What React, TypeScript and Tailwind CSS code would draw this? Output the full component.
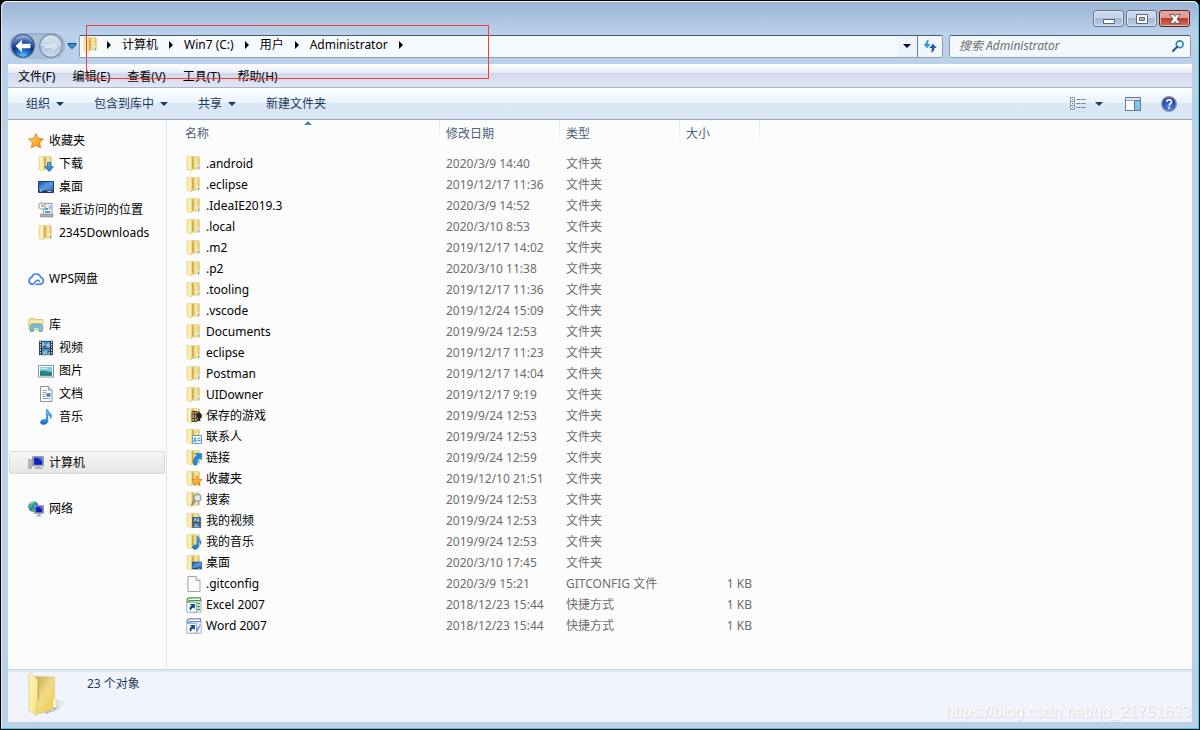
import type { ReactNode } from "react";

type FileRow = {
  name: string;
  date: string;
  type: string;
  size?: string;
  icon?: string;
};

const FOLDER = "文件夹";
const SHORTCUT = "快捷方式";

const files: FileRow[] = [
  { name: ".android", date: "2020/3/9 14:40", type: FOLDER },
  { name: ".eclipse", date: "2019/12/17 11:36", type: FOLDER },
  { name: ".IdeaIE2019.3", date: "2020/3/9 14:52", type: FOLDER },
  { name: ".local", date: "2020/3/10 8:53", type: FOLDER },
  { name: ".m2", date: "2019/12/17 14:02", type: FOLDER },
  { name: ".p2", date: "2020/3/10 11:38", type: FOLDER },
  { name: ".tooling", date: "2019/12/17 11:36", type: FOLDER },
  { name: ".vscode", date: "2019/12/24 15:09", type: FOLDER },
  { name: "Documents", date: "2019/9/24 12:53", type: FOLDER },
  { name: "eclipse", date: "2019/12/17 11:23", type: FOLDER },
  { name: "Postman", date: "2019/12/17 14:04", type: FOLDER },
  { name: "UIDowner", date: "2019/12/17 9:19", type: FOLDER },
  { name: "保存的游戏", date: "2019/9/24 12:53", type: FOLDER, icon: "games" },
  { name: "联系人", date: "2019/9/24 12:53", type: FOLDER, icon: "contacts" },
  { name: "链接", date: "2019/9/24 12:59", type: FOLDER, icon: "links" },
  { name: "收藏夹", date: "2019/12/10 21:51", type: FOLDER, icon: "favorites" },
  { name: "搜索", date: "2019/9/24 12:53", type: FOLDER, icon: "searches" },
  { name: "我的视频", date: "2019/9/24 12:53", type: FOLDER, icon: "videos" },
  { name: "我的音乐", date: "2019/9/24 12:53", type: FOLDER, icon: "music" },
  { name: "桌面", date: "2020/3/10 17:45", type: FOLDER, icon: "desktop" },
  { name: ".gitconfig", date: "2020/3/9 15:21", type: "GITCONFIG 文件", size: "1 KB", icon: "file" },
  { name: "Excel 2007", date: "2018/12/23 15:44", type: SHORTCUT, size: "1 KB", icon: "excel" },
  { name: "Word 2007", date: "2018/12/23 15:44", type: SHORTCUT, size: "1 KB", icon: "word" },
];

const sidebarGroups = [
  {
    label: "收藏夹",
    icon: "star",
    items: [
      { label: "下载", icon: "downloads" },
      { label: "桌面", icon: "screen" },
      { label: "最近访问的位置", icon: "recent" },
      { label: "2345Downloads", icon: "folder" },
    ],
  },
  { label: "WPS网盘", icon: "cloud", items: [] },
  {
    label: "库",
    icon: "library",
    items: [
      { label: "视频", icon: "film" },
      { label: "图片", icon: "picture" },
      { label: "文档", icon: "document" },
      { label: "音乐", icon: "note" },
    ],
  },
  { label: "计算机", icon: "computer", items: [], selected: true },
  { label: "网络", icon: "network", items: [] },
];

const crumbs = ["计算机", "Win7 (C:)", "用户", "Administrator"];
const menus = ["文件(F)", "编辑(E)", "查看(V)", "工具(T)", "帮助(H)"];
const commands = [
  { label: "组织", arrow: true },
  { label: "包含到库中", arrow: true },
  { label: "共享", arrow: true },
  { label: "新建文件夹", arrow: false },
];

/* Gradients shared by every icon */
function IconDefs() {
  return (
    <svg className="absolute size-0" aria-hidden="true">
      <defs>
        <linearGradient id="flap" x1="0" x2="1" y1="0" y2="0">
          <stop offset="0" stopColor="#f3e39a" />
          <stop offset="0.5" stopColor="#fdf4c2" />
          <stop offset="1" stopColor="#e6cc6a" />
        </linearGradient>
        <linearGradient id="body" x1="0" x2="1" y1="0" y2="0">
          <stop offset="0" stopColor="#b8963a" />
          <stop offset="0.45" stopColor="#f1de8e" />
          <stop offset="0.7" stopColor="#f6e7a4" />
          <stop offset="1" stopColor="#d9bb50" />
        </linearGradient>
        <linearGradient id="bigFlap" x1="0" x2="1" y1="0" y2="1">
          <stop offset="0" stopColor="#fff6bf" />
          <stop offset="0.6" stopColor="#fbeb9c" />
          <stop offset="1" stopColor="#efcf62" />
        </linearGradient>
        <linearGradient id="bigBody" x1="0" x2="1" y1="0" y2="1">
          <stop offset="0" stopColor="#c2a345" />
          <stop offset="0.5" stopColor="#f0dc86" />
          <stop offset="1" stopColor="#e9c944" />
        </linearGradient>
        <linearGradient id="shade" x1="0" x2="1" y1="0" y2="0">
          <stop offset="0" stopColor="#7f8aa0" stopOpacity="0.8" />
          <stop offset="1" stopColor="#c6ccda" stopOpacity="0" />
        </linearGradient>
        <radialGradient id="backBall" cx="0.5" cy="1" r="1">
          <stop offset="0" stopColor="#5fe0ff" />
          <stop offset="0.3" stopColor="#2273cc" />
          <stop offset="0.55" stopColor="#0b2f8a" />
          <stop offset="0.75" stopColor="#4268b4" />
          <stop offset="1" stopColor="#b9cbee" />
        </radialGradient>
        <linearGradient id="forwardBall" x1="0" x2="0" y1="0" y2="1">
          <stop offset="0" stopColor="#d9e5f1" />
          <stop offset="0.48" stopColor="#c6d6e8" />
          <stop offset="0.52" stopColor="#afc5de" />
          <stop offset="1" stopColor="#cfe0f1" />
        </linearGradient>
        <linearGradient id="blue" x1="0" x2="0" y1="0" y2="1">
          <stop offset="0" stopColor="#6fb9ee" />
          <stop offset="1" stopColor="#1672c4" />
        </linearGradient>
        <linearGradient id="screen" x1="0" x2="1" y1="0" y2="1">
          <stop offset="0" stopColor="#1d4fae" />
          <stop offset="0.5" stopColor="#5a9ae4" />
          <stop offset="1" stopColor="#1f5cbc" />
        </linearGradient>
        <linearGradient id="star" x1="0" x2="1" y1="0" y2="1">
          <stop offset="0" stopColor="#ffe7a0" />
          <stop offset="0.5" stopColor="#fdb52c" />
          <stop offset="1" stopColor="#ef7d12" />
        </linearGradient>
        <radialGradient id="help" cx="0.5" cy="0.75" r="0.7">
          <stop offset="0" stopColor="#4b8cf0" />
          <stop offset="1" stopColor="#17309a" />
        </radialGradient>
      </defs>
    </svg>
  );
}

const folderShape = (
  <>
    <path d="M5 1.500 6.500.400h6l.800.800v12H5z" fill="url(#body)" stroke="#d8bd62" strokeWidth=".5" />
    <path d="M1 .500 4.600.300l2 1.800v10.200L5.200 15 1 13.400z" fill="url(#flap)" stroke="#dcc570" strokeWidth=".5" />
    <path d="M6.800 2.200v10" stroke="#a98a38" strokeWidth=".6" />
    <path d="M12.200 9v4" stroke="#fff" strokeWidth="1.400" />
    <path d="M12.400 10.500v2.200" stroke="#3da2e6" strokeWidth="1.100" />
  </>
);

const starPath = "M8 .6 10.2 5.4l5.3.6-3.9 3.6 1 5.3L8 12.3l-4.6 2.6 1-5.3L.5 6l5.3-.6z";
const notePath = "M7.3.5h1.4c.3 2.5 4.3 3.6 3.8 7-.1 1-.5 1.7-1 2.3.3-2.3-.8-3.4-2.6-4.1v6.600c0 1.900-2 3.200-4.200 3.200-1.900 0-3.400-.9-3.400-2.300 0-1.600 1.900-2.800 4-2.800.8 0 1.500.2 2 .4z";

const filmShape = (
  <>
    <path d="M1 .8h14v14.400H1z" fill="#2c3238" />
    <path d="M4 1.400h8v6H4zM4 8.400h8v6.200H4z" fill="#3f8ed0" />
    <path d="m4 1.400 4 3.400 4-2v4.600H4zM4 14.600l3-4 5 2v2z" fill="#8ac3ec" />
    <path d="M4.500 7.400 7 4.600l2 2.800M8 14.600l2.400-4.300 1.600 1.300" fill="#5c4450" />
    <path d="M2.400 1.500v13.400M13.600 1.500v13.400" stroke="#e6e6e6" strokeWidth="1.200" strokeDasharray="1.4 1.2" />
  </>
);

const screenShape = (
  <>
    <path d="M.5 2.500h15v11H.5z" fill="url(#screen)" stroke="#1c3f80" />
    <path d="M1 11.500h14V14H1z" fill="#27364f" />
    <circle cx="3" cy="11.600" r="1.300" fill="#4fd1e8" />
    <path d="M9.500 12h4v1h-4z" fill="#a9c4e8" />
  </>
);

function shortcutShape(color: string, letter: ReactNode) {
  return (
    <>
      <path d="M4.500 3.500h10.700v11.700H4.500z" fill="#f5f8fa" stroke="#9aaab6" strokeWidth=".8" />
      <path d="M1 5V3.600C1 2 2.200.900 3.800.900h10.700v2.700H3.600c-.8 0-1.300.6-1.300 1.400z" fill="#fff" stroke={color} strokeWidth="1.100" />
      {letter}
      <path d="M.8 5.400h9.600v9.800H.8z" fill="#fff" stroke="#8a97a8" strokeWidth=".8" />
      <path d="M3.900 7.100h5v5L7.300 10.500c-1.700 1-2.400 2-2.300 3.600-2.300-1.900-1.800-4.400.6-5.300z" fill="#174a96" />
    </>
  );
}

const shapes: Record<string, ReactNode> = {
  folder: folderShape,
  games: (
    <>
      {folderShape}
      <path d="M6 3.500h5v10H6z" fill="#b9a777" stroke="#4b4330" />
      <path d="M6.500 6.500h4M8.500 4v9M6.500 10.500h4" stroke="#4b4330" />
      <path d="M12 3.500h1.600v1.300c1.500.5 2.400 1.800 2.300 3.500-.1 1.500-1 2.300-2.100 2.400l.9 2.300h-3.400l.7-2.300-1.800-2.400c0-1.700.7-3 1.800-3.500z" fill="#222" />
    </>
  ),
  contacts: (
    <>
      {folderShape}
      <path d="M6.500 6.500h9v8h-9z" fill="#e9f5fb" stroke="#5a9fc4" />
      <circle cx="9" cy="9.600" r="1.100" fill="#4e93c0" />
      <path d="M7.700 12.600c0-2.200 2.600-2.200 2.600 0M11.500 9.500h3M11.500 11.500h3" stroke="#4e93c0" fill="#4e93c0" />
    </>
  ),
  links: (
    <>
      {folderShape}
      <path d="M9 3.500h6.700v6.700l-2-2c-2 1.200-3 3.500-2.800 6.800H7.700C6.600 11 8 7.500 10.900 5.500z" fill="#2389dc" stroke="#1564b0" strokeWidth=".5" />
    </>
  ),
  favorites: (
    <>
      {folderShape}
      <g transform="translate(5.500 4.500) scale(.68)">
        <path d={starPath} fill="url(#star)" stroke="#df6a12" />
      </g>
    </>
  ),
  searches: (
    <>
      {folderShape}
      <circle cx="11.500" cy="5.800" r="3.500" fill="#dbe8f3" stroke="#8b9aa6" strokeWidth="1.200" />
      <path d="m9 8.500-3.500 4.800" stroke="#84857f" strokeWidth="1.800" />
    </>
  ),
  videos: (
    <>
      {folderShape}
      <g transform="translate(5.500 3.500) scale(.64 .74)">{filmShape}</g>
    </>
  ),
  music: (
    <>
      {folderShape}
      <g transform="translate(5.500 2) scale(.75 .86)">
        <path d={notePath} fill="url(#blue)" stroke="#1d73bd" />
      </g>
    </>
  ),
  desktop: (
    <>
      {folderShape}
      <g transform="translate(6 5.500) scale(.62)">{screenShape}</g>
    </>
  ),
  downloads: (
    <>
      {folderShape}
      <path d="M9.500 6.500h3.400v4.300h2.500L11.200 15.600 7 10.800h2.500z" fill="url(#blue)" stroke="#1667ab" strokeWidth=".8" />
    </>
  ),
  file: (
    <>
      <path d="M2 .5h8l4 4v11H2z" fill="#fcfcfc" stroke="#a3a3a3" />
      <path d="M10 .5v4h4" fill="#e8e8e8" stroke="#a3a3a3" />
    </>
  ),
  excel: shortcutShape(
    "#3a9a4a",
    <path d="M11 6.500h3.200M11 9.500h3.200M11 12.500h3.200" stroke="#3a9a4a" strokeWidth="1.500" />,
  ),
  word: shortcutShape(
    "#6c86c9",
    <path d="m10 6.500 1.300 6 3-6" stroke="#7c95d2" strokeWidth="1.300" fill="none" />,
  ),
  star: <path d={starPath} fill="url(#star)" stroke="#dc7417" strokeWidth=".8" />,
  screen: screenShape,
  recent: (
    <>
      <path d="M5.500 1.500h8.500v11H5.500z" fill="#f1f3f5" stroke="#8f979f" />
      <path d="M2.500 12h12.500v3H2.500z" fill="#a9adb2" stroke="#868b91" strokeWidth=".6" />
      <path d="M7 6h3v2H7zM7 9h5v2H7z" fill="#4ea0cf" />
      <path d="M10.500 3.500h2.500v4h-2.500z" fill="#a8c7dc" />
      <circle cx="4" cy="4" r="3.300" fill="#fafafa" stroke="#8f979f" />
      <path d="M4 2v2.200h1.800" stroke="#555" fill="none" strokeWidth=".8" />
    </>
  ),
  cloud: (
    <>
      <path d="M4.300 13.200a3.400 3.400 0 0 1-.6-6.700 4.600 4.600 0 0 1 8.900-.2 3.500 3.500 0 0 1-.5 6.900H8.200" fill="none" stroke="#3b7df0" strokeWidth="1.600" strokeLinecap="round" />
      <path d="M4.300 13.200c2.500 0 2.300-2.100 3.700-3.400 1.200-1.100 2.900-.6 3.400.6" fill="none" stroke="#3b7df0" strokeWidth="1.400" strokeLinecap="round" />
    </>
  ),
  library: (
    <>
      <path d="M.8 2.500 2 1.300h4l1 1.200h8v10.300H.8z" fill="#f3df8f" stroke="#ceb25c" strokeWidth=".7" />
      <path d="M1 4.600h14" stroke="#fff5c4" />
      <path d="M2.500 14.500V9c0-1 .8-1.900 1.800-1.900h7.900c1 0 1.800.9 1.800 1.900v5.500h-2.800V10H5.300v4.500z" fill="#7cc6ea" stroke="#3b93c3" strokeWidth=".8" />
    </>
  ),
  film: filmShape,
  picture: (
    <>
      <path d="M.5 2.500h15v11.500H.5z" fill="#fff" stroke="#8b959e" />
      <path d="M2 4h12v8.500H2z" fill="#86c7ee" />
      <path d="M2 8c3-1.500 5 .5 12 .8v3.700H2z" fill="#2a8a6c" />
      <path d="M2 11h12v1.500H2z" fill="#1f6e8e" />
      <path d="M3 6c2-1.500 5-.5 6-.5" stroke="#fff" fill="none" />
    </>
  ),
  document: (
    <>
      <path d="M2.500.5h8l3.500 3.500v11.500H2.500z" fill="#fdfdfe" stroke="#8a95a3" />
      <path d="M10.500.5V4H14" fill="#dfe7f0" stroke="#8a95a3" />
      <path d="M4.500 4.500h4M4.500 6.500h4M4.500 8.500h3M4.500 10.500h3M4.500 12.500h7.500" stroke="#8297bb" strokeWidth=".9" />
      <path d="M8.500 7.200h4v3.500h-4z" fill="#3f7fc8" />
    </>
  ),
  note: (
    <g transform="translate(1 0)">
      <path d={notePath} fill="url(#blue)" stroke="#1d73bd" strokeWidth=".5" />
    </g>
  ),
  computer: (
    <>
      <path d="M.7 4.500h2.600v8.800H.7z" fill="#c7cbd0" stroke="#7f858c" strokeWidth=".7" />
      <path d="M1.500 11h1v1h-1z" fill="#59c24c" />
      <path d="M4.500 1.500h11v9.500h-11z" fill="#c9cdd3" stroke="#858b93" strokeWidth=".8" />
      <path d="M5.700 2.500h8.700v7.400H5.700z" fill="#0f24b8" />
      <path d="M9.500 2.500h4.900V6.500z" fill="#5379ea" />
      <path d="M9 11h2.500v1.700H9zM6.500 12.600h7.800v1.500H6.500z" fill="#a9aeb5" />
    </>
  ),
  network: (
    <>
      <circle cx="5.500" cy="5.500" r="5.200" fill="#2a85cf" />
      <path d="M2 2.500c2-2 4-2 5-1L5.500 4 4 4.500 3 7 .7 5.500zM4 8l2.500 1-.5 1.800-2-.4z" fill="#4fbd4d" />
      <path d="M2 3c1-1.500 2.500-2 4-2" stroke="#c4f0ff" fill="none" />
      <path d="M6.500 4.500h9v8h-9z" fill="#c9cdd3" stroke="#7d848d" strokeWidth=".7" />
      <path d="M7.500 5.500h7v6h-7z" fill="#0f24b8" />
      <path d="M11 5.500h3.500V9z" fill="#5379ea" />
      <path d="M10.200 12.500h1.600v1.700h-1.600zM8.500 14.300h5v1.200h-5z" fill="#9da3ab" />
    </>
  ),
};

function Icon({ name }: { name: string }) {
  return (
    <svg viewBox="0 0 16 16" className="size-4 shrink-0" fill="none" aria-hidden="true">
      {shapes[name]}
    </svg>
  );
}

function DownArrow() {
  return (
    <svg viewBox="0 0 8 4" className="h-1 w-2 shrink-0" fill="currentColor" aria-hidden="true">
      <path d="M0 0h8L4 4z" />
    </svg>
  );
}

function CrumbArrow() {
  return (
    <svg viewBox="0 0 4 8" className="h-2 w-1 shrink-0" aria-hidden="true">
      <path d="M0 0v8l4-4z" />
    </svg>
  );
}

function TitleBar() {
  return (
    <div className="flex justify-end gap-0.5 pt-[9px] pr-0.5">
      <button
        aria-label="最小化"
        className="flex h-[17px] w-[31px] items-center justify-center rounded-[3px] border border-[#62738f] bg-[linear-gradient(#c8d8ea_0_45%,#9fb7d2_50%,#bdd1e7)] inset-ring inset-ring-[#dbe7f3]"
      >
        <svg viewBox="0 0 12 12" className="size-3" aria-hidden="true">
          <path d="M.5 6.500h11v4H.5z" fill="#fff" stroke="#5b6577" />
        </svg>
      </button>
      <button
        aria-label="最大化"
        className="flex h-[17px] w-[31px] items-center justify-center rounded-[3px] border border-[#62738f] bg-[linear-gradient(#c8d8ea_0_45%,#9fb7d2_50%,#bdd1e7)] inset-ring inset-ring-[#dbe7f3]"
      >
        <svg viewBox="0 0 12 12" className="size-3" aria-hidden="true">
          <path d="M.5 1.500h11v9H.5z" fill="#fff" stroke="#5b6577" />
          <path d="M3.500 4.500h5v3h-5z" fill="#9fb7d2" stroke="#5b6577" />
        </svg>
      </button>
      <button
        aria-label="关闭"
        className="flex h-[17px] w-[31px] items-center justify-center rounded-[3px] border border-[#5a1d2c] bg-[linear-gradient(#e0a096_0_45%,#b93e2b_50%,#d0715c)] inset-ring inset-ring-[#e6b3ab]"
      >
        <svg viewBox="0 0 12 12" className="size-3" aria-hidden="true">
          <path d="M.6 1.500h3.700L6 3.500l1.700-2h3.700L8 6l3.400 4.500H7.700L6 8.500l-1.700 2H.6L4 6z" fill="#fff" stroke="#56506a" strokeWidth=".9" />
        </svg>
      </button>
    </div>
  );
}

function NavBar() {
  return (
    <div className="mt-1.5 mb-[5px] flex h-[26px] items-center pr-px pl-px">
      <div className="flex h-[26px] shrink-0 items-center gap-1 rounded-full bg-[#a9bfd9] px-0.5 shadow-[inset_0_1px_2px_#8ea4c0]">
        <button aria-label="后退">
          <svg viewBox="0 0 24 24" className="size-6" aria-hidden="true">
            <circle cx="12" cy="12" r="11.300" fill="url(#backBall)" stroke="#44587e" strokeWidth="1.200" />
            <path d="m4.500 12 6.500-6.300v4h8.500v4.600H11v4z" fill="#fff" />
          </svg>
        </button>
        <button aria-label="前进">
          <svg viewBox="0 0 24 24" className="size-6" aria-hidden="true">
            <circle cx="12" cy="12" r="11.300" fill="url(#forwardBall)" stroke="#7c8da4" strokeWidth="1.200" />
            <path d="m19.500 12-6.500-6.300v4H4.500v4.600H13v4z" fill="#d9e4f0" stroke="#b3c4d8" strokeWidth=".6" />
          </svg>
        </button>
      </div>
      <button aria-label="最近的页面" className="mx-0.5 shrink-0">
        <svg viewBox="0 0 10 8" className="h-2 w-2.5" aria-hidden="true">
          <path d="M1 1.500h8v1.200L5 6.800 1 2.700z" fill="#3a94d4" stroke="#174477" />
        </svg>
      </button>

      <div className="flex h-[23px] min-w-0 flex-1 rounded-xs border border-[#8e9bb0] border-t-[#4d5866] bg-[#f8fbfe]">
        <nav aria-label="地址" className="flex min-w-0 flex-1 items-center gap-2 pb-0.5 pl-[3px]">
          <Icon name="folder" />
          <ol className="flex items-center">
            {crumbs.map((crumb) => (
              <li key={crumb} className="flex items-center">
                <CrumbArrow />
                <a href="#" className="px-[11px] whitespace-nowrap">
                  {crumb}
                </a>
              </li>
            ))}
            <li>
              <CrumbArrow />
            </li>
          </ol>
        </nav>
        <button aria-label="以前的位置" className="flex w-5 items-center justify-center bg-[#eef4fb] text-[#000050]">
          <DownArrow />
        </button>
        <button aria-label="刷新" className="flex w-[25px] items-center justify-center border-l border-[#6d7d92] bg-[#f1f6fb]">
          <svg viewBox="0 0 14 14" className="size-3.5" aria-hidden="true">
            <path d="M6 .5C3.600.900 2.600 2.500 2.600 5H.200L4 9.200 7.800 5H5.200c0-1.800.1-2.800.8-4.500z" fill="#3d9bd9" />
            <path d="M8 13.500c2.400-.4 3.400-2 3.400-4.500h2.400L10 4.800 6.200 9h2.600c0 1.800-.1 2.800-.8 4.500z" fill="#235fb0" />
          </svg>
        </button>
      </div>

      <label className="ml-1.5 flex h-[23px] w-[242px] shrink-0 items-center rounded-xs border border-[#8e9bb0] border-t-[#4d5866] bg-[#f3f8fd] pr-1.5 pl-[9px]">
        <input
          type="search"
          aria-label="搜索"
          placeholder="搜索 Administrator"
          className="min-w-0 flex-1 bg-transparent italic outline-none placeholder:text-[#6d6d6d]"
        />
        <svg viewBox="0 0 12 12" className="size-3" fill="none" aria-hidden="true">
          <circle cx="7.700" cy="4.300" r="3.400" stroke="#2f86cc" strokeWidth="1.700" />
          <path d="M5.200 6.800 1 11" stroke="#2a4fa0" strokeWidth="2" strokeLinecap="round" />
        </svg>
      </label>
    </div>
  );
}

function MenuBar() {
  return (
    <div className="flex h-6 items-center gap-[17px] border-t border-b border-t-white border-b-[#a9b4cb] bg-[linear-gradient(#fff,#e6e9f4_36%,#d3d8ec_37%,#e1e6f5)] px-2.5 pt-0.5">
      {menus.map((menu) => (
        <button key={menu}>{menu}</button>
      ))}
    </div>
  );
}

function CommandBar() {
  return (
    <div className="flex h-8 items-center justify-between border-b border-[#9dabc2] bg-[linear-gradient(#fdfeff,#e8f3fc_47%,#dce7f5_48%,#dae6f4)] pr-[15px] pl-[18px] text-[#1e395b]">
      <div className="flex gap-[30px]">
        {commands.map((command) => (
          <button key={command.label} className="flex items-center gap-1.5">
            {command.label}
            {command.arrow && <DownArrow />}
          </button>
        ))}
      </div>

      <div className="flex items-center">
        <button aria-label="更改您的视图" className="flex items-center gap-[9px]">
          <svg viewBox="0 0 16 14" className="h-3.5 w-4" fill="none" aria-hidden="true">
            <path d="M.5.5h4v4h-4zM.5 4.500h4v4h-4zM.5 8.500h4v4h-4z" fill="#fff" stroke="#8595a8" />
            <path d="M2 2h1v1H2z" fill="#3a6fb5" />
            <path d="M2 6h1v1H2z" fill="#d23b2c" />
            <path d="M2 10h1v1H2z" fill="#3a6fb5" />
            <path d="M6.500 2.500h4M11.500 2.500h4M6.500 6.500h4M11.500 6.500h4M6.500 10.500h4M11.500 10.500h4" stroke="#70819a" />
          </svg>
          <DownArrow />
        </button>
        <button aria-label="显示预览窗格" className="ml-[22px]">
          <svg viewBox="0 0 16 14" className="h-3.5 w-4" aria-hidden="true">
            <path d="M.5.5h15v13H.5z" fill="#fff" stroke="#5b7896" />
            <path d="M1 1h14v2H1z" fill="#dbe5f0" />
            <path d="M9.500 3.500h6v10h-6z" fill="#7fc6e6" stroke="#5b7896" />
            <path d="M1 3.500h9" stroke="#8aa0b8" />
          </svg>
        </button>
        <button aria-label="获取帮助" className="ml-5">
          <svg viewBox="0 0 16 16" className="size-4" aria-hidden="true">
            <circle cx="8" cy="8" r="7.300" fill="url(#help)" stroke="#8b93a5" strokeWidth="1.400" />
            <path d="M5.600 6.100c0-3.400 4.900-3.200 4.900-.4 0 1.800-2.300 1.900-2.300 4" fill="none" stroke="#fff" strokeWidth="1.700" />
            <circle cx="8.200" cy="12" r="1.100" fill="#fff" />
          </svg>
        </button>
      </div>
    </div>
  );
}

function Sidebar() {
  return (
    <aside className="flex w-[159px] shrink-0 flex-col gap-[23px] border-r border-[#d6e5f5] pt-[9px]">
      {sidebarGroups.map((group) => (
        <div key={group.label}>
          <a
            href="#"
            className={
              group.selected
                ? "mx-px flex h-[23px] items-center gap-[5px] rounded-xs border border-[#d9d9d9] bg-linear-to-b from-[#f8f8f8] to-[#e5e5e5] pl-[18px]"
                : "flex h-[23px] items-center gap-[5px] pl-5"
            }
          >
            <Icon name={group.icon} />
            {group.label}
          </a>
          {group.items.map((item) => (
            <a key={item.label} href="#" className="flex h-[23px] items-center gap-[5px] pl-[30px] whitespace-nowrap">
              <Icon name={item.icon} />
              {item.label}
            </a>
          ))}
        </div>
      ))}
    </aside>
  );
}

function FileList() {
  const headCell =
    "h-[33px] bg-[linear-gradient(#dbe6f3,#fcfcfc)] bg-[length:1px_24px] bg-right-top bg-no-repeat pt-[5px] pl-1.5 text-left align-top leading-[18px] font-normal";

  return (
    <main className="min-w-0 flex-1">
      <table className="w-[593px] table-fixed border-collapse text-[#6d6d6d]">
        <colgroup>
          <col className="w-[273px]" />
          <col className="w-[120px]" />
          <col className="w-[120px]" />
          <col className="w-20" />
        </colgroup>
        <thead className="text-[#4c607a]">
          <tr>
            <th className="relative h-[33px] bg-[linear-gradient(#dbe6f3,#fcfcfc)] bg-[length:1px_24px] bg-right-top bg-no-repeat pt-[5px] pl-[18px] text-left align-top leading-[18px] font-normal">
              名称
              <svg viewBox="0 0 8 4" className="absolute top-px left-1/2 h-1 w-2" aria-hidden="true">
                <path d="M4 0 8 4H0z" fill="#4d88ad" />
              </svg>
            </th>
            <th className={headCell}>修改日期</th>
            <th className={headCell}>类型</th>
            <th className={headCell}>大小</th>
          </tr>
        </thead>
        <tbody>
          {files.map((file) => (
            <tr key={file.name} className="h-[21px] whitespace-nowrap">
              <td className="p-0 pl-[19px] text-black">
                <div className="flex items-center gap-1">
                  <Icon name={file.icon ?? "folder"} />
                  {file.name}
                </div>
              </td>
              <td className="p-0 pl-1.5">{file.date}</td>
              <td className="p-0 pl-1.5">{file.type}</td>
              <td className="p-0 pr-2 text-right">{file.size}</td>
            </tr>
          ))}
        </tbody>
      </table>
    </main>
  );
}

function DetailsPane() {
  return (
    <footer className="relative flex h-[53px] items-start gap-[19px] border-t border-[#c8d6e6] bg-[#f1f4fc] pl-5 text-[#1e395b] shadow-[inset_0_2px_1px_#dce7f4]">
      <svg viewBox="0 0 40 46" className="mt-[3px] h-[46px] w-10" aria-hidden="true">
        <path d="m27 27 12.500 1-9 9-14 4z" fill="url(#shade)" />
        <path d="M5 3.500 26.500 4V36L10 41z" fill="url(#bigBody)" stroke="#dcc46c" strokeWidth=".6" />
        <path d="M1 1 3 .5l7 6.500V26l-1 2v14.500l-8-4.500z" fill="url(#bigFlap)" stroke="#e3cc78" strokeWidth=".8" />
        <path d="M10.300 7.500V26" stroke="#b99c48" strokeWidth=".8" />
        <path d="M25 24.500h3.500v12L25 38z" fill="#f2dd85" />
        <path d="M26.500 26v9" stroke="#fff" strokeWidth="1.800" />
        <circle cx="26.500" cy="35.500" r="1.100" fill="#4f9fe0" />
      </svg>
      <p className="pt-[5px] leading-[18px]">23 个对象</p>
      <p className="absolute right-px bottom-0 font-['Liberation_Sans',sans-serif] text-base leading-5 text-white/80 [text-shadow:1px_1px_1px_#d3d5db]">
        https://blog.csdn.net/qq_21751633
      </p>
    </footer>
  );
}

export default function App() {
  return (
    <div className="relative flex min-h-screen flex-col bg-black p-px font-['Noto_Sans','Noto_Sans_CJK_SC',sans-serif] text-xs text-black">
      <IconDefs />
      <div className="flex flex-1 flex-col rounded-t-md border-r border-b border-l border-r-[#2fd3ea] border-b-[#2fd3ea] border-l-[#dfeaf5] bg-[#b9d1ea] bg-[linear-gradient(#9ab3d1,#b9d1ea)] bg-[length:100%_32px] bg-no-repeat px-1.5 pb-1.5 shadow-[inset_0_1px_#f4f8fc]">
        <TitleBar />
        <NavBar />
        <MenuBar />
        <CommandBar />
        <div className="flex flex-1 bg-[#fcfcfc]">
          <Sidebar />
          <FileList />
        </div>
        <DetailsPane />
      </div>

      {/* Highlight around the path */}
      <div className="pointer-events-none absolute top-[25px] left-[86px] h-[54px] w-[403px] border border-[#f93a3a]" />
    </div>
  );
}
